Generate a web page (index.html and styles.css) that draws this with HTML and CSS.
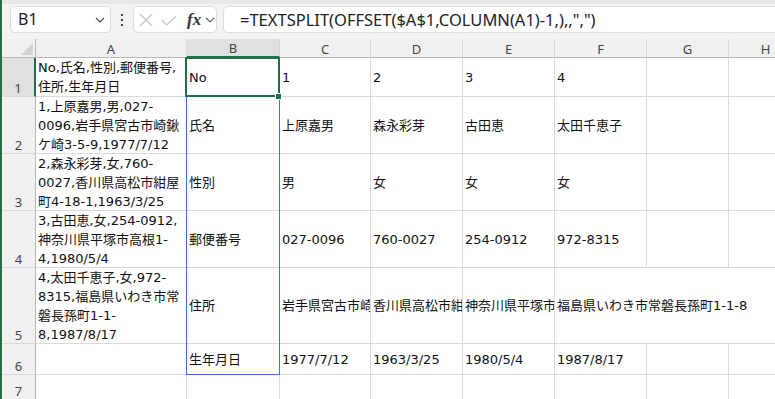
FILE: index.html
```html
<!DOCTYPE html>
<html lang="ja">
<head>
<meta charset="utf-8">
<title>TEXTSPLIT</title>
<link rel="stylesheet" href="styles.css">
</head>
<body>
<div class="app">
  <div class="fbar">
    <div class="namebox">
      <span class="ref">B1</span>
      <svg class="chev" width="10" height="6" viewBox="0 0 10 6"><polyline points="1,1 5,5 9,1" fill="none" stroke="#555" stroke-width="1.3"/></svg>
    </div>
    <div class="grip"><i></i><i></i><i></i></div>
    <div class="fxbox">
      <svg class="ico-x" width="14" height="14" viewBox="0 0 14 14"><path d="M1 1 L13 13 M13 1 L1 13" stroke="#c4c4c4" stroke-width="1.2" fill="none"/></svg>
      <svg class="ico-ok" width="16" height="10" viewBox="0 0 16 10"><polyline points="1,4 5.5,9 15,0.5" fill="none" stroke="#c4c4c4" stroke-width="1.2"/></svg>
      <span class="fx">fx</span>
      <svg class="chev-s" width="10" height="6" viewBox="0 0 10 6"><polyline points="1,1 5,5 9,1" fill="none" stroke="#666" stroke-width="1.2"/></svg>
    </div>
    <div class="formula">=TEXTSPLIT(OFFSET($A$1,COLUMN(A1)-1,),,",")</div>
  </div>

  <div class="stack">
    <div class="cells">
      <div class="corner"><span class="tri"></span></div>
      <div class="ch">A</div><div class="ch on">B</div><div class="ch">C</div><div class="ch">D</div><div class="ch">E</div><div class="ch">F</div><div class="ch">G</div><div class="ch">H</div>

      <div class="rh on">1</div>
      <div class="c"><span>No,氏名,性別,郵便番号,<br>住所,生年月日</span></div>
      <div class="c"><span>No</span></div>
      <div class="c"><span>1</span></div>
      <div class="c"><span>2</span></div>
      <div class="c"><span>3</span></div>
      <div class="c"><span>4</span></div>
      <div class="c"></div>
      <div class="c"></div>

      <div class="rh">2</div>
      <div class="c"><span>1,上原嘉男,男,027-<br>0096,岩手県宮古市崎鍬<br>ケ崎3-5-9,1977/7/12</span></div>
      <div class="c"><span>氏名</span></div>
      <div class="c"><span>上原嘉男</span></div>
      <div class="c"><span>森永彩芽</span></div>
      <div class="c"><span>古田恵</span></div>
      <div class="c"><span>太田千恵子</span></div>
      <div class="c"></div>
      <div class="c"></div>

      <div class="rh">3</div>
      <div class="c"><span>2,森永彩芽,女,760-<br>0027,香川県高松市紺屋<br>町4-18-1,1963/3/25</span></div>
      <div class="c"><span>性別</span></div>
      <div class="c"><span>男</span></div>
      <div class="c"><span>女</span></div>
      <div class="c"><span>女</span></div>
      <div class="c"><span>女</span></div>
      <div class="c"></div>
      <div class="c"></div>

      <div class="rh">4</div>
      <div class="c"><span>3,古田恵,女,254-0912,<br>神奈川県平塚市高根1-<br>4,1980/5/4</span></div>
      <div class="c"><span>郵便番号</span></div>
      <div class="c"><span>027-0096</span></div>
      <div class="c"><span>760-0027</span></div>
      <div class="c"><span>254-0912</span></div>
      <div class="c"><span>972-8315</span></div>
      <div class="c"></div>
      <div class="c"></div>

      <div class="rh">5</div>
      <div class="c"><span>4,太田千恵子,女,972-<br>8315,福島県いわき市常<br>磐長孫町1-1-<br>8,1987/8/17</span></div>
      <div class="c"><span>住所</span></div>
      <div class="c"><span>岩手県宮古市崎鍬ケ崎3-5-9</span></div>
      <div class="c"><span>香川県高松市紺屋町4-18-1</span></div>
      <div class="c"><span>神奈川県平塚市高根1-4</span></div>
      <div class="c span3"><span>福島県いわき市常磐長孫町1-1-8</span></div>

      <div class="rh">6</div>
      <div class="c"></div>
      <div class="c"><span>生年月日</span></div>
      <div class="c"><span>1977/7/12</span></div>
      <div class="c"><span>1963/3/25</span></div>
      <div class="c"><span>1980/5/4</span></div>
      <div class="c"><span>1987/8/17</span></div>
      <div class="c"></div>
      <div class="c"></div>

      <div class="rh">7</div>
      <div class="c"></div><div class="c"></div><div class="c"></div><div class="c"></div><div class="c"></div><div class="c"></div><div class="c"></div><div class="c"></div>
    </div>

    <div class="overlay">
      <div class="spill"></div>
      <div class="sel"><span class="handle"></span></div>
    </div>
  </div>
</div>
</body>
</html>
```

FILE: styles.css
```css
* { box-sizing: border-box; margin: 0; padding: 0; }
html, body { width: 775px; height: 399px; overflow: hidden; }
body {
  background: #fff;
  font-family: "DejaVu Sans", "Noto Sans CJK JP", sans-serif;
  color: #1a1a1a;
}
.app {
  height: 399px;
  border-left: 2px solid #2a6c47;
  display: flex;
  flex-direction: column;
  overflow: hidden;
}

/* formula bar */
.fbar {
  flex: none;
  height: 39px;
  background: #f3f3f3;
  border-top: 4px solid #e7e7e7;
  padding: 2px 0 0 8px;
  display: flex;
  align-items: flex-start;
}
.namebox {
  flex: none;
  width: 101px;
  height: 27px;
  background: #fff;
  border: 1px solid #dcdcdc;
  border-radius: 5px;
  display: flex;
  align-items: center;
  justify-content: space-between;
  padding: 0 5px 0 7px;
}
.ref {
  font-family: "Noto Sans", sans-serif;
  font-size: 16px;
  color: #222;
  line-height: 25px;
}
.grip {
  flex: none;
  width: 22px;
  height: 27px;
  display: flex;
  flex-direction: column;
  align-items: center;
  justify-content: center;
  gap: 3px;
}
.grip i { display: block; width: 2px; height: 2px; background: #444; }
.fxbox {
  flex: none;
  width: 84px;
  height: 27px;
  background: #fff;
  border: 1px solid #dcdcdc;
  border-radius: 5px;
  display: flex;
  align-items: center;
  padding-left: 5px;
}
.ico-ok { margin-left: 8px; margin-top: 2px; }
.fx {
  margin-left: 10px;
  font-family: "Liberation Serif", serif;
  font-style: italic;
  font-weight: bold;
  font-size: 17px;
  color: #333;
  line-height: 20px;
}
.chev-s { margin-left: 4px; }
.formula {
  flex: 1;
  margin-left: 6px;
  height: 27px;
  background: #fff;
  border: 1px solid #dcdcdc;
  border-right: none;
  border-radius: 5px 0 0 5px;
  padding-left: 16px;
  font-family: "Noto Sans", sans-serif;
  font-size: 16.5px;
  line-height: 25px;
  color: #222;
  white-space: nowrap;
  overflow: hidden;
}

/* sheet */
.stack {
  flex: 1;
  display: grid;
  overflow: hidden;
  background: #fff;
}
.stack > * { grid-area: 1 / 1; }
.cells, .overlay {
  display: grid;
  grid-template-columns: 34px 151px 93px 91px 92px 92px 92px 82px 74px;
  grid-template-rows: 19px 39px 57px 57px 57px 76px 31px 25px;
}
.overlay { pointer-events: none; }

.c {
  border-right: 1px solid #dadada;
  border-bottom: 1px solid #dadada;
  font-size: 13px;
  line-height: 19px;
  padding: 0 2px;
  display: flex;
  align-items: center;
  white-space: nowrap;
  overflow: hidden;
  color: #111;
}
.c.span3 { grid-column: span 3; }

.corner, .ch, .rh {
  background: #f0f0f0;
  font-family: "Noto Sans", sans-serif;
  font-size: 13px;
  color: #444;
  display: flex;
}
.corner {
  border-right: 1px solid #b8b8b8;
  border-bottom: 1px solid #b8b8b8;
  align-items: flex-end;
  justify-content: flex-end;
}
.tri {
  width: 12px;
  height: 12px;
  margin: 0 2px 2px 0;
  background: #d2d2d2;
  clip-path: polygon(100% 0, 100% 100%, 0 100%);
}
.ch {
  border-right: 1px solid #d8d8d8;
  border-bottom: 1px solid #b8b8b8;
  justify-content: center;
  align-items: center;
  padding-top: 2px;
  line-height: 15px;
}
.ch.on { background: #e0e0e0; border-bottom: 2px solid #1e7145; }
.rh {
  border-right: 1px solid #b8b8b8;
  border-bottom: 1px solid #d8d8d8;
  justify-content: center;
  align-items: flex-end;
  line-height: 15px;
}
.rh.on { background: #e0e0e0; border-right: 2px solid #1e7145; }

.spill {
  grid-column: 3;
  grid-row: 2 / 8;
  margin-left: -1px;
  border: 1px solid #3874d8;
}
.sel {
  grid-column: 3;
  grid-row: 2;
  margin: -1px 0 0 -2px;
  border: 2px solid #1e7145;
  position: relative;
}
.handle {
  position: absolute;
  right: -4px;
  bottom: -5px;
  width: 7px;
  height: 7px;
  background: #1e7145;
  border: 1px solid #fff;
}
```
